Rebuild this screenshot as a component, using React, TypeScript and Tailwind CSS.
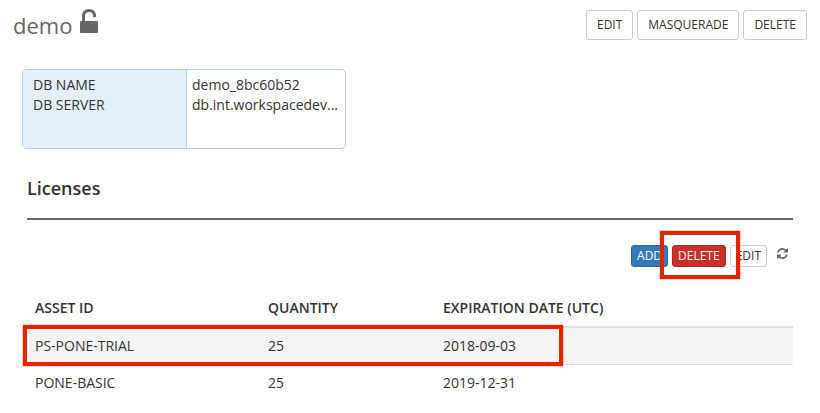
import type { ReactNode } from "react";

const licenses = [
  { id: "PS-PONE-TRIAL", quantity: 25, expires: "2018-09-03", highlighted: true },
  { id: "PONE-BASIC", quantity: 25, expires: "2019-12-31", highlighted: false },
];

function HeaderButton({ children }: { children: ReactNode }) {
  return (
    <button type="button" className="h-[30px] rounded-[3px] border border-[#ccc] bg-white px-[10px] text-xs text-[#333]">
      {children}
    </button>
  );
}

function SmallButton({ tone, children }: { tone: string; children: ReactNode }) {
  return (
    <button type="button" className={`h-[22px] rounded-[3px] border px-[5px] text-xs leading-[18px] ${tone}`}>
      {children}
    </button>
  );
}

function UnlockIcon() {
  return (
    <svg width="18" height="24" viewBox="0 0 18 24" className="text-[#666]" aria-hidden="true">
      <path
        d="M2 12V6.900C2 2.900 5 0 9 0s7 2.900 7 6.500V7.200q0 1-1 1h-1q-1 0-1-1V6.500C13 4.400 11.300 3 9 3S5 4.600 5 6.900V12z"
        fill="currentColor"
      />
      <rect x="0" y="12" width="18" height="12" rx="1" fill="currentColor" />
    </svg>
  );
}

function RefreshIcon() {
  return (
    <svg width="11" height="11" viewBox="0 0 1536 1536" fill="currentColor" aria-hidden="true">
      <path d="M1511 928q0 5-1 7-64 268-268 434.500T764 1536q-146 0-282.500-55T238 1324l-129 129q-19 19-45 19t-45-19-19-45V960q0-26 19-45t45-19h448q26 0 45 19t19 45-19 45l-137 137q71 66 161 102t187 36q134 0 250-65t186-179q11-17 53-117 8-23 30-23h192q13 0 22.500 9.500t9.500 22.500zm25-800v448q0 26-19 45t-45 19h-448q-26 0-45-19t-19-45 19-45l138-138Q969 256 768 256q-134 0-250 65T332 500q-11 17-53 117-8 23-30 23H50q-13 0-22.500-9.500T18 608v-7q65-268 270-434.500T768 0q146 0 284 55.500T1297 212l130-129q19-19 45-19t45 19 19 45z" />
    </svg>
  );
}

function Highlight({ className }: { className: string }) {
  return (
    <span
      aria-hidden="true"
      className={`pointer-events-none absolute border-4 border-[#e32400] outline outline-[#e32400]/20 ${className}`}
    />
  );
}

export default function App() {
  return (
    <main className="min-h-screen bg-white font-['Open_Sans',sans-serif] text-sm leading-5 text-[#333]">
      <header className="flex items-start justify-between pt-[10px] pr-[13px] pl-[13px]">
        <h1 className="flex h-[30px] items-center gap-2 text-[22px] text-[#666]">
          demo
          <span className="mb-2">
            <UnlockIcon />
          </span>
        </h1>
        <div className="flex gap-1">
          <HeaderButton>EDIT</HeaderButton>
          <HeaderButton>MASQUERADE</HeaderButton>
          <HeaderButton>DELETE</HeaderButton>
        </div>
      </header>

      <dl className="mt-[29px] ml-[22px] grid h-20 w-[324px] grid-cols-[164px_1fr] overflow-hidden rounded-[5px] border border-[#b0d2ea]">
        <div className="border-r border-[#b0d2ea] bg-[#e4f0f9] px-[10px] py-[5px]">
          <dt>DB NAME</dt>
          <dt>DB SERVER</dt>
        </div>
        <div className="min-w-0 px-[5px] py-[5px]">
          <dd>demo_8bc60b52</dd>
          <dd>db.int.workspacedev...</dd>
        </div>
      </dl>

      <section className="mx-[27px] mt-[29px]">
        <h2 className="border-b-2 border-[#666] pb-5 text-lg leading-5 font-semibold">Licenses</h2>

        <div className="mt-[25px] flex items-center justify-end gap-1">
          <SmallButton tone="border-[#2e6da4] bg-[#337ab7] text-white">ADD</SmallButton>
          <div className="relative">
            <SmallButton tone="border-[#ac2925] bg-[#c9302c] text-white">DELETE</SmallButton>
            <Highlight className="-top-[14px] -right-[14px] -bottom-3 -left-3 z-10" />
          </div>
          <SmallButton tone="border-[#ccc] bg-white text-[#333]">EDIT</SmallButton>
          <button type="button" aria-label="Refresh" className="mr-[5px] mb-[6px] ml-[6px] text-[#666]">
            <RefreshIcon />
          </button>
        </div>

        <div className="relative mt-[23px]">
          <table className="w-full table-fixed border-separate border-spacing-0 text-left">
            <colgroup>
              <col className="w-[233px]" />
              <col className="w-[175px]" />
              <col />
            </colgroup>
            <thead>
              <tr>
                <th className="border-b-2 border-[#ddd] p-2 font-semibold">ASSET ID</th>
                <th className="border-b-2 border-[#ddd] p-2 font-semibold">QUANTITY</th>
                <th className="border-b-2 border-[#ddd] p-2 font-semibold">EXPIRATION DATE (UTC)</th>
              </tr>
            </thead>
            <tbody>
              {licenses.map((item) => (
                <tr key={item.id} className={item.highlighted ? "bg-[#f4f4f4] *:border-b *:border-[#ddd]" : ""}>
                  <td className="p-2">{item.id}</td>
                  <td className="p-2">{item.quantity}</td>
                  <td className="p-2">{item.expires}</td>
                </tr>
              ))}
            </tbody>
          </table>
          <Highlight className="top-[35px] -left-1 h-[41px] w-[540px]" />
        </div>
      </section>
    </main>
  );
}
